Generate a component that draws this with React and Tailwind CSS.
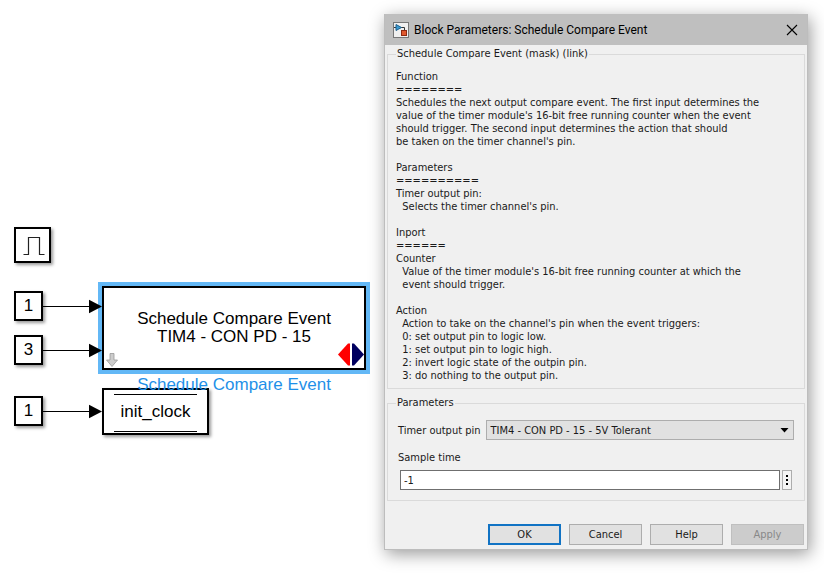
import React from "react";

const ARIAL = "font-['Liberation_Sans',Arial,sans-serif]";
const TAHOMA = "font-['DejaVu_Sans_Condensed','DejaVu_Sans',sans-serif]";

const DESCRIPTION = `Function
========
Schedules the next output compare event. The first input determines the
value of the timer module's 16-bit free running counter when the event
should trigger. The second input determines the action that should
be taken on the timer channel's pin.

Parameters
==========
Timer output pin:
  Selects the timer channel's pin.

Inport
======
Counter
  Value of the timer module's 16-bit free running counter at which the
  event should trigger.

Action
  Action to take on the channel's pin when the event triggers:
  0: set output pin to logic low.
  1: set output pin to logic high.
  2: invert logic state of the outpin pin.
  3: do nothing to the output pin.`;

function Constant({ value, place }) {
  return (
    <div
      className={`absolute left-[14px] flex h-[30px] w-[29px] items-center justify-center border-2 border-black bg-white text-[17px] leading-5 shadow-[2px_2px_3px_rgba(0,0,0,0.4)] ${place}`}
    >
      {value}
    </div>
  );
}

function Arrow({ place }) {
  return (
    <svg className={`absolute left-[42px] ${place}`} width="60" height="15" viewBox="0 0 60 15" aria-hidden="true">
      <path d="M0 7.5H48" stroke="#000" />
      <path d="M47 0.8L60 7.5L47 14.2Z" fill="#000" />
    </svg>
  );
}

function Diagram() {
  return (
    <section aria-label="Model canvas" className={`relative w-96 shrink-0 text-black ${ARIAL}`}>
      <div className="absolute left-[14px] top-[227px] h-[36px] w-[37px] border-2 border-black bg-white shadow-[2px_2px_3px_rgba(0,0,0,0.4)]">
        <svg width="33" height="32" viewBox="0 0 33 32" aria-hidden="true">
          <path d="M7.5 25.5H12.5V8.5H23.5V25.5H28.5" fill="none" stroke="#222" strokeWidth="1.2" />
        </svg>
      </div>

      <Constant value="1" place="top-[291px]" />
      <Constant value="3" place="top-[335px]" />
      <Constant value="1" place="top-[396px]" />

      <div className="absolute left-[98px] top-[282px] h-[92px] w-[272px] bg-[#63b8f6] p-1">
        <div className="relative flex h-full items-center justify-center border-2 border-black bg-white text-[17px] leading-[18px]">
          <p className="whitespace-pre text-center">{"Schedule Compare Event\nTIM4 - CON PD - 15"}</p>
          <svg className="absolute bottom-px left-0.5" width="12" height="14" viewBox="0 0 12 14" aria-hidden="true">
            <path d="M4 0.5H8V7H11.5L6 13.5L0.5 7H4Z" fill="#ccc" stroke="#999" strokeWidth="0.8" />
          </svg>
          <svg className="absolute bottom-0.5 right-0" width="27" height="23" viewBox="0 0 27 23" aria-hidden="true">
            <path d="M1 11.5L11 0.5H13V22.5H11Z" fill="#f00" />
            <path d="M15 0.5H17L27 11.5L17 22.5H15Z" fill="#000060" />
          </svg>
        </div>
      </div>
      <div className="absolute left-[102px] top-[388px] h-[47px] w-[107px] border-2 border-black bg-white px-2.5 pb-px pt-1 shadow-[2px_2px_3px_rgba(0,0,0,0.4)]">
        <div className="flex h-full items-center justify-center border-y border-black pb-0.5 text-[17px] leading-5">
          init_clock
        </div>
      </div>
      <div className="absolute left-[98px] top-[376px] w-[272px] text-center text-[17px] leading-[18px] text-[#1e90e8]">
        Schedule Compare Event
      </div>

      <Arrow place="top-[299px]" />
      <Arrow place="top-[343px]" />
      <Arrow place="top-[404px]" />
    </section>
  );
}

function TitleBar() {
  return (
    <header className="flex h-[31px] items-center bg-[#bfbfbf] pl-2 pr-[9px]">
      <svg width="16" height="16" viewBox="0 0 16 16" aria-hidden="true">
        <rect x="0.5" y="0.5" width="15" height="15" fill="#f0f0f0" stroke="#777" />
        <path d="M1 5.5H3M8 5.5H11.5V9" fill="none" stroke="#333" />
        <path d="M3 2.5L8.5 5.5L3 8.5Z" fill="#3b9bd0" stroke="#1c5f8c" />
        <rect x="8.5" y="8.5" width="5" height="5" fill="#e0582e" stroke="#8c2a12" />
      </svg>
      <h1 className="ml-[5px] flex-1 font-[Roboto,'Open_Sans',sans-serif] text-xs text-black">
        Block Parameters: Schedule Compare Event
      </h1>
      <button type="button" aria-label="Close">
        <svg width="12" height="12" viewBox="0 0 12 12" aria-hidden="true">
          <path d="M1 1L11 11M11 1L1 11" stroke="#000" strokeWidth="1.1" />
        </svg>
      </button>
    </header>
  );
}

function Group({ title, children }) {
  return (
    <fieldset className="border border-[#dadada] px-2">
      <legend className="px-px leading-[14px]">{title}</legend>
      {children}
    </fieldset>
  );
}

const BUTTON = "h-[21px] w-[73px] leading-[17px]";
const PLAIN = "border border-[#adadad] bg-[#e1e1e1]";

function Dialog() {
  return (
    <div
      role="dialog"
      aria-label="Block Parameters: Schedule Compare Event"
      className={`mr-4 mt-3.5 min-w-0 flex-1 self-start border border-t-0 border-[#bdbdbd] bg-[#f0f0f0] text-[11px] leading-[13px] text-[#1a1a1a] shadow-[2px_4px_16px_rgba(0,0,0,0.4)] ${TAHOMA}`}
    >
      <TitleBar />
      <form className="px-0.5 pb-1 pt-0.5" onSubmit={(e) => e.preventDefault()}>
        <Group title="Schedule Compare Event (mask) (link)">
          <p className="whitespace-pre pb-1.5 pt-[9px]">{DESCRIPTION}</p>
        </Group>

        <div className="mt-[7px]">
          <Group title="Parameters">
            <div className="flex items-center gap-1.5 px-0.5 pt-2.5">
              <label htmlFor="pin">Timer output pin</label>
              <div className="relative min-w-0 flex-1">
                <select id="pin" className="h-5 w-full appearance-none border border-[#adadad] bg-[#e1e1e1] pl-[3px] pr-5">
                  <option>TIM4 - CON PD - 15 - 5V Tolerant</option>
                </select>
                <svg className="pointer-events-none absolute right-[5px] top-2" width="9" height="5" viewBox="0 0 9 5" aria-hidden="true">
                  <path d="M0.5 0H8.5L4.5 4.5Z" fill="#000" />
                </svg>
              </div>
            </div>
            <label htmlFor="sample" className="mt-[11px] block pl-0.5">
              Sample time
            </label>
            <div className="mb-2.5 mt-1.5 flex gap-0.5 px-1">
              <input
                id="sample"
                type="text"
                defaultValue="-1"
                className="h-5 min-w-0 flex-1 border border-[#6f6f6f] bg-white px-[3px]"
              />
              <button type="button" aria-label="More options" className="flex h-5 w-2.5 items-center justify-center border border-[#adadad] bg-[#f4f4f4]">
                <svg width="2" height="10" viewBox="0 0 2 10" aria-hidden="true">
                  <path d="M0 0H2V2H0ZM0 4H2V6H0ZM0 8H2V10H0Z" fill="#000" />
                </svg>
              </button>
            </div>
          </Group>
        </div>

        <div className="mt-[23px] flex justify-end gap-2 pr-px">
          <button type="submit" className={`${BUTTON} border-2 border-[#1173c4] bg-[#e1e1e1]`}>OK</button>
          <button type="button" className={`${BUTTON} ${PLAIN}`}>Cancel</button>
          <button type="button" className={`${BUTTON} ${PLAIN}`}>Help</button>
          <button type="button" disabled className={`${BUTTON} border border-[#bfbfbf] bg-[#cccccc] text-[#888888]`}>Apply</button>
        </div>
      </form>
    </div>
  );
}

export default function App() {
  return (
    <main className="flex min-h-screen overflow-hidden bg-white">
      <Diagram />
      <Dialog />
    </main>
  );
}
